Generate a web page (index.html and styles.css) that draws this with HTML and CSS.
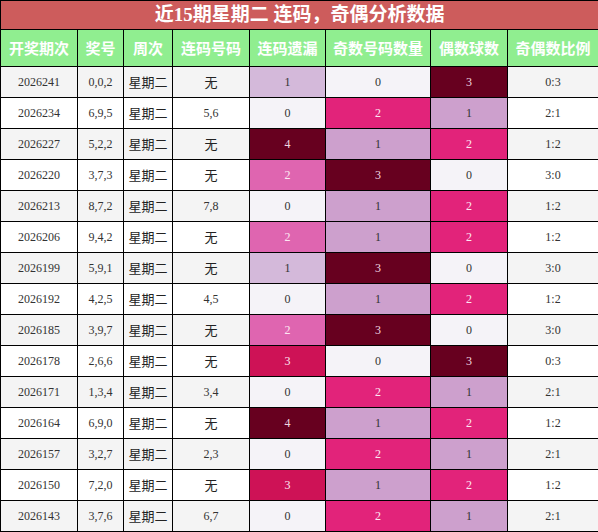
FILE: index.html
```html
<!DOCTYPE html>
<html lang="zh-CN">
<head>
    <meta charset="UTF-8">
    <meta name="viewport" content="width=device-width, initial-scale=1.0">
    <title>连码奇偶分析</title>
    <link rel="stylesheet" href="styles.css">
</head>
<body>
    <table class="stats">
        <colgroup>
            <col class="c-issue">
            <col class="c-num">
            <col class="c-week">
            <col class="c-pair">
            <col class="c-miss">
            <col class="c-odd">
            <col class="c-even">
            <col class="c-ratio">
        </colgroup>
        <thead>
            <tr>
                <th class="title" colspan="8">近15期星期二 连码，奇偶分析数据</th>
            </tr>
            <tr class="head">
                <th>开奖期次</th>
                <th>奖号</th>
                <th>周次</th>
                <th>连码号码</th>
                <th>连码遗漏</th>
                <th>奇数号码数量</th>
                <th>偶数球数</th>
                <th>奇偶数比例</th>
            </tr>
        </thead>
        <tbody>
            <tr><td>2026241</td><td>0,0,2</td><td class="cn">星期二</td><td class="cn">无</td><td class="m1">1</td><td class="q0">0</td><td class="q3">3</td><td>0:3</td></tr>
            <tr><td>2026234</td><td>6,9,5</td><td class="cn">星期二</td><td>5,6</td><td class="m0">0</td><td class="q2">2</td><td class="q1">1</td><td>2:1</td></tr>
            <tr><td>2026227</td><td>5,2,2</td><td class="cn">星期二</td><td class="cn">无</td><td class="m4">4</td><td class="q1">1</td><td class="q2">2</td><td>1:2</td></tr>
            <tr><td>2026220</td><td>3,7,3</td><td class="cn">星期二</td><td class="cn">无</td><td class="m2">2</td><td class="q3">3</td><td class="q0">0</td><td>3:0</td></tr>
            <tr><td>2026213</td><td>8,7,2</td><td class="cn">星期二</td><td>7,8</td><td class="m0">0</td><td class="q1">1</td><td class="q2">2</td><td>1:2</td></tr>
            <tr><td>2026206</td><td>9,4,2</td><td class="cn">星期二</td><td class="cn">无</td><td class="m2">2</td><td class="q1">1</td><td class="q2">2</td><td>1:2</td></tr>
            <tr><td>2026199</td><td>5,9,1</td><td class="cn">星期二</td><td class="cn">无</td><td class="m1">1</td><td class="q3">3</td><td class="q0">0</td><td>3:0</td></tr>
            <tr><td>2026192</td><td>4,2,5</td><td class="cn">星期二</td><td>4,5</td><td class="m0">0</td><td class="q1">1</td><td class="q2">2</td><td>1:2</td></tr>
            <tr><td>2026185</td><td>3,9,7</td><td class="cn">星期二</td><td class="cn">无</td><td class="m2">2</td><td class="q3">3</td><td class="q0">0</td><td>3:0</td></tr>
            <tr><td>2026178</td><td>2,6,6</td><td class="cn">星期二</td><td class="cn">无</td><td class="m3">3</td><td class="q0">0</td><td class="q3">3</td><td>0:3</td></tr>
            <tr><td>2026171</td><td>1,3,4</td><td class="cn">星期二</td><td>3,4</td><td class="m0">0</td><td class="q2">2</td><td class="q1">1</td><td>2:1</td></tr>
            <tr><td>2026164</td><td>6,9,0</td><td class="cn">星期二</td><td class="cn">无</td><td class="m4">4</td><td class="q1">1</td><td class="q2">2</td><td>1:2</td></tr>
            <tr><td>2026157</td><td>3,2,7</td><td class="cn">星期二</td><td>2,3</td><td class="m0">0</td><td class="q2">2</td><td class="q1">1</td><td>2:1</td></tr>
            <tr><td>2026150</td><td>7,2,0</td><td class="cn">星期二</td><td class="cn">无</td><td class="m3">3</td><td class="q1">1</td><td class="q2">2</td><td>1:2</td></tr>
            <tr><td>2026143</td><td>3,7,6</td><td class="cn">星期二</td><td>6,7</td><td class="m0">0</td><td class="q2">2</td><td class="q1">1</td><td>2:1</td></tr>
        </tbody>
    </table>
</body>
</html>
```

FILE: styles.css
```css
body {
    margin: 0;
    background: #fff;
    font-family: "Liberation Serif", "Noto Sans CJK SC", serif;
}
.stats {
    border-collapse: collapse;
    table-layout: fixed;
    width: 598px;
}
.c-issue { width: 77px; }
.c-num { width: 46px; }
.c-week { width: 49px; }
.c-pair { width: 77px; }
.c-miss { width: 76px; }
.c-odd { width: 105px; }
.c-even { width: 77px; }
.c-ratio { width: 91px; }
th, td {
    border: 1px solid #000;
    text-align: center;
    padding: 0;
    line-height: 18px;
}
.title {
    height: 28px;
    background-color: #cd5c5c;
    color: #fff;
    font-size: 19px;
    font-weight: bold;
    line-height: 22px;
}
.head th {
    height: 36px;
    background-color: #90ee90;
    color: #fff;
    font-family: "Noto Sans CJK SC", sans-serif;
    font-size: 15px;
    font-weight: bold;
}
td {
    height: 30px;
    font-size: 12px;
    color: #333;
}
tbody tr:nth-child(odd) td {
    background-color: #f4f4f4;
}
tbody tr:nth-child(even) td {
    background-color: #fff;
}
td.cn {
    font-family: "Noto Sans CJK SC", sans-serif;
    font-size: 13px;
    color: #222;
}

/* 连码遗漏 0-4 */
tbody tr td.m0 { background-color: #f5f3f8; }
tbody tr td.m1 { background-color: #d4b9da; }
tbody tr td.m2 { background-color: #df65b0; color: #fde8f2; }
tbody tr td.m3 { background-color: #ce1256; color: #fde8f2; }
tbody tr td.m4 { background-color: #67001f; color: #f0d8e0; }

/* 奇偶数量 0-3 */
tbody tr td.q0 { background-color: #f5f3f8; }
tbody tr td.q1 { background-color: #cda0cd; }
tbody tr td.q2 { background-color: #e2237a; color: #fde8f2; }
tbody tr td.q3 { background-color: #67001f; color: #f0d8e0; }
```
